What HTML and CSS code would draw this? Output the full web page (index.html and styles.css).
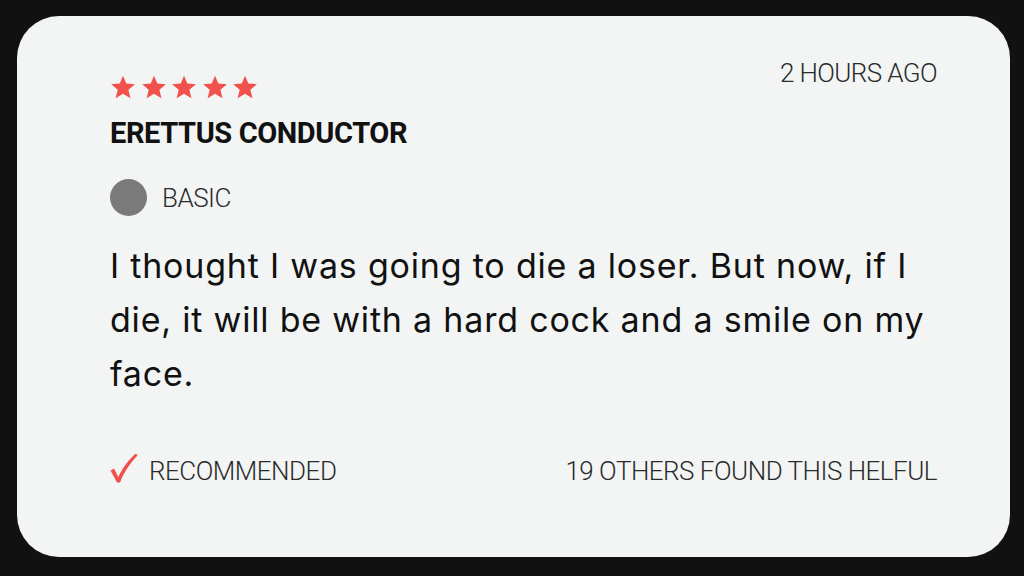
FILE: index.html
```html
<!DOCTYPE html>
<html lang="en">
<head>
<meta charset="utf-8">
<link rel="stylesheet" href="styles.css">
</head>
<body>
<div class="card">
  <div class="top">
    <div class="who">
      <div class="stars">
        <svg viewBox="0 0 24 24" class="star"><path d="M12 1.5l3.1 7.3 7.9.6-6 5.2 1.9 7.7L12 18.2l-6.8 4.1 1.9-7.7-6-5.2 7.9-.6z"/></svg>
        <svg viewBox="0 0 24 24" class="star"><path d="M12 1.5l3.1 7.3 7.9.6-6 5.2 1.9 7.7L12 18.2l-6.8 4.1 1.9-7.7-6-5.2 7.9-.6z"/></svg>
        <svg viewBox="0 0 24 24" class="star"><path d="M12 1.5l3.1 7.3 7.9.6-6 5.2 1.9 7.7L12 18.2l-6.8 4.1 1.9-7.7-6-5.2 7.9-.6z"/></svg>
        <svg viewBox="0 0 24 24" class="star"><path d="M12 1.5l3.1 7.3 7.9.6-6 5.2 1.9 7.7L12 18.2l-6.8 4.1 1.9-7.7-6-5.2 7.9-.6z"/></svg>
        <svg viewBox="0 0 24 24" class="star"><path d="M12 1.5l3.1 7.3 7.9.6-6 5.2 1.9 7.7L12 18.2l-6.8 4.1 1.9-7.7-6-5.2 7.9-.6z"/></svg>
      </div>
      <div class="name">ERETTUS CONDUCTOR</div>
      <div class="badge"><span class="dot"></span><span class="label">BASIC</span></div>
    </div>
    <div class="time">2 HOURS AGO</div>
  </div>
  <p class="review">I thought I was going to die a loser. But now, if I die, it will be with a hard cock and a smile on my face.</p>
  <div class="bottom">
    <div class="rec">
      <svg class="check" viewBox="0 0 28 30"><path d="M0.5 17.5 L4 15.5 L8.3 24 C12.5 15 18.5 6.5 26 0.5 L27.5 2.5 C20 10 14 19.5 10 29.5 L7 29.5 Z"/></svg>
      <span class="label">RECOMMENDED</span>
    </div>
    <div class="label">19 OTHERS FOUND THIS HELFUL</div>
  </div>
</div>
</body>
</html>
```

FILE: styles.css
```css
html, body {
  margin: 0;
  background: #111111;
}
body {
  padding: 16px 14px 19px 17px;
  font-family: Roboto, "Liberation Sans", sans-serif;
  color: #111;
}
.card {
  box-sizing: border-box;
  height: 541px;
  background: #f2f5f4;
  border-radius: 42px;
  padding: 42px 73px 0 93px;
  display: flex;
  flex-direction: column;
}
.top {
  display: flex;
  justify-content: space-between;
  align-items: flex-start;
}
.stars {
  display: flex;
  gap: 4.5px;
  margin-top: 16px;
}
.star {
  width: 26px;
  height: 26px;
  fill: #f0514c;
}
.name {
  font-weight: 700;
  font-size: 29px;
  line-height: 34px;
  margin-top: 16px;
  letter-spacing: -0.4px;
}
.badge {
  display: flex;
  align-items: center;
  margin-top: 29px;
}
.dot {
  width: 37px;
  height: 37px;
  border-radius: 50%;
  background: #7a7a7a;
  margin-right: 15px;
}
.label {
  font-weight: 300;
  font-size: 26px;
  color: #2a2a2a;
  letter-spacing: -0.5px;
}
.time {
  font-weight: 300;
  font-size: 26px;
  color: #2a2a2a;
  line-height: 30px;
  letter-spacing: -0.6px;
}
.review {
  margin: 23px 0 0;
  font-family: Inter, Roboto, sans-serif;
  font-size: 34px;
  line-height: 54px;
  font-weight: 400;
  letter-spacing: 0.8px;
}
.bottom {
  margin-top: 55px;
  display: flex;
  justify-content: space-between;
  align-items: center;
}
.rec {
  display: flex;
  align-items: center;
}
.check {
  width: 28px;
  height: 30px;
  fill: #f0514c;
  margin-right: 11px;
  margin-top: -6px;
}
```
